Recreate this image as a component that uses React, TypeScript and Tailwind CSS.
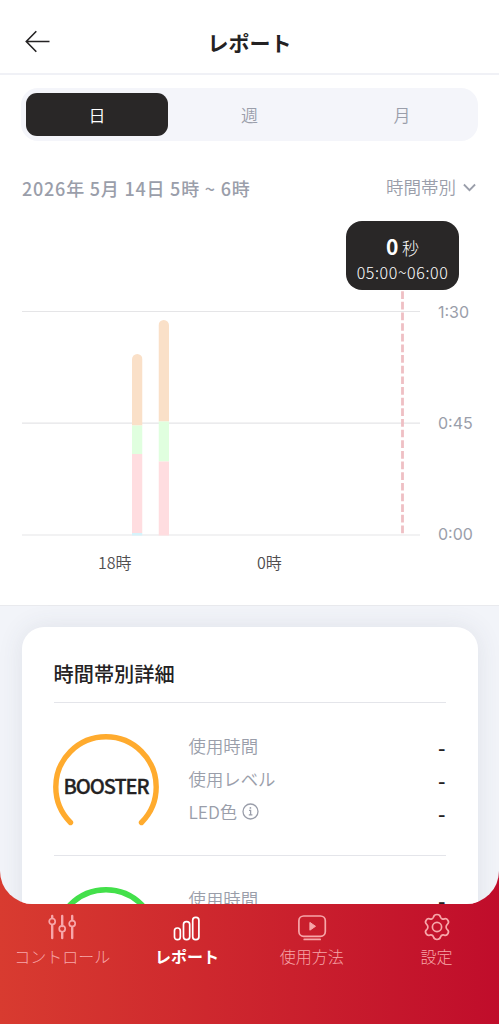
import React from 'react';
import { clsx } from 'clsx';

const TABS = ['日', '週', '月'];

type Segment = { color: string; from: number; to: number };

const BARS: { x: number; segments: Segment[] }[] = [
  {
    x: 110,
    segments: [
      { color: '#fae0c8', from: 43, to: 114.5 },
      { color: '#e0ffdf', from: 114.5, to: 143 },
      { color: '#ffdde0', from: 143, to: 222 },
      { color: '#d6f3fb', from: 222, to: 224.5 },
    ],
  },
  {
    x: 136.5,
    segments: [
      { color: '#fae0c8', from: 9, to: 110.5 },
      { color: '#e0ffdf', from: 110.5, to: 150.5 },
      { color: '#ffdde0', from: 150.5, to: 224.5 },
    ],
  },
];

const MODES = [
  { name: 'BOOSTER', color: '#ffab2e' },
  { name: '', color: '#43e04a' },
];

function Header() {
  return (
    <header className="relative flex h-[75px] items-center justify-center border-b-2 border-[#f0f1f6] pt-[10px]">
      <svg className="absolute left-[25px] top-[30px]" width="25" height="23" viewBox="0 0 25 23" fill="none" stroke="#242223" strokeWidth="1.6">
        <path d="M24.5 11.5H1.5M11.3 1.3L1.3 11.5L11.3 21.7" />
      </svg>
      <h1 className="text-[21px] font-bold leading-7 text-[#242223]">レポート</h1>
    </header>
  );
}

function PeriodTabs() {
  return (
    <div className="mx-[21px] mt-[13px] grid h-[53px] grid-cols-[142px_1fr_142px] rounded-[17px] bg-[#f4f5fa] p-[5px]">
      {TABS.map((tab, i) => (
        <button
          key={tab}
          className={clsx(
            'flex items-center justify-center text-[17px] font-[350]',
            i === 0 ? 'rounded-[11px] bg-[#292727] text-white' : 'text-[#9a9eaa]'
          )}
        >
          {tab}
        </button>
      ))}
    </div>
  );
}

function UsageChart() {
  return (
    <div className="relative mt-[110px] h-[294px]">
      <div className="flex">
        <svg className="ml-[22px] shrink-0 overflow-visible" width="398" height="226" viewBox="0 0 398 226">
          <g stroke="#e5e5e7" strokeWidth="1.2">
            <path d="M0 .5H398M0 112.2H398M0 224H398" />
          </g>
          {BARS.map((bar, i) => (
            <g key={bar.x}>
              <clipPath id={`bar-${i}`}>
                <path d={`M${bar.x} 225V${bar.segments[0].from + 5.25}a5.25 5.25 0 0 1 10.5 0V225z`} />
              </clipPath>
              <g clipPath={`url(#bar-${i})`}>
                {bar.segments.map((s) => (
                  <rect key={s.from} x={bar.x} y={s.from} width="10.5" height={s.to - s.from} fill={s.color} />
                ))}
              </g>
            </g>
          ))}
          <path d="M380.5 222.2V-21" stroke="#efbfc4" strokeWidth="2.8" strokeDasharray="7.7 2.95" />
        </svg>
        <div className="-mt-[9px] ml-[18px] flex h-[242px] flex-col justify-between font-['Inter'] text-[16px] leading-5 text-[#9a9eaa]">
          <span>1:30</span>
          <span>0:45</span>
          <span>0:00</span>
        </div>
      </div>
      <div className="mt-[6px] flex text-[16px] font-[350] leading-6 text-[#504e4f]">
        <span className="ml-[98px] w-[159px]">18時</span>
        <span>0時</span>
      </div>
      <div className="absolute left-[346px] -top-[90px] flex h-[69px] w-[113px] flex-col items-center rounded-[16px] bg-[#292727] pt-[12px] text-white">
        <p className="text-[17px] font-light leading-[27px]">
          <span className="text-[21px] font-bold">0</span> 秒
        </p>
        <p className="-mt-px text-[16px] font-light leading-6 tracking-[0.6px]">05:00~06:00</p>
      </div>
    </div>
  );
}

function InfoIcon() {
  return (
    <svg width="17" height="17" viewBox="0 0 17 17" fill="none" stroke="#9a9eaa" strokeWidth="1.3">
      <circle cx="8.5" cy="8.5" r="7.5" />
      <path d="M7 7.4h1.6v4.4M6.8 11.8h3.6" />
      <circle cx="8.4" cy="4.9" r=".9" fill="#9a9eaa" stroke="none" />
    </svg>
  );
}

function ModeRow({ name, color }: { name: string; color: string }) {
  return (
    <div className="flex h-[153px] border-t border-[#e4e5ea] pt-[26px]">
      <div className="relative -ml-px mt-[5px] flex h-[106px] w-[106px] shrink-0 items-center justify-center">
        <svg className="absolute inset-0" width="106" height="106" viewBox="0 0 106 106" fill="none">
          <path d="M17.5 88.5A50.2 50.2 0 1 1 88.5 88.5" stroke={color} strokeWidth="5.4" strokeLinecap="round" />
        </svg>
        <span className="-mt-[3px] whitespace-nowrap pl-px text-[20px] font-medium tracking-[-1.05px] text-[#242223] [-webkit-text-stroke:0.3px]">{name}</span>
      </div>
      <dl className="ml-[30px] flex-1 text-[17.4px] font-[350] text-[#9a9eaa]">
        {['使用時間', '使用レベル', 'LED色'].map((label) => (
          <div key={label} className="flex h-[33px] items-center justify-between">
            <dt className="flex items-center gap-[5px] leading-[33px]">
              {label}
              {label === 'LED色' && <InfoIcon />}
            </dt>
            <dd className="pt-[2px] text-[21px] font-medium leading-6 text-[#242223]">-</dd>
          </div>
        ))}
      </dl>
    </div>
  );
}

const NAV = [
  {
    label: 'コントロール',
    icon: (
      <>
        <path strokeWidth="2.4" strokeLinecap="round" d="M5.2 3v2M5.2 12v13M15.2 3v10M15.2 20v5M25.2 3v4M25.2 14v11" />
        <circle cx="5.2" cy="8.5" r="3" />
        <circle cx="15.2" cy="15.8" r="3" />
        <circle cx="25.2" cy="10.6" r="3" />
      </>
    ),
  },
  {
    label: 'レポート',
    icon: (
      <>
        <rect x="2.5" y="15" width="5.8" height="11.7" rx="2.7" />
        <rect x="11.5" y="8.7" width="6.2" height="18" rx="2.9" />
        <rect x="20.7" y="4.4" width="6.2" height="22.3" rx="2.9" />
      </>
    ),
  },
  {
    label: '使用方法',
    icon: (
      <>
        <rect x="1.9" y="3" width="26.4" height="20.4" rx="4.8" />
        <path fill="currentColor" strokeWidth="1" strokeLinejoin="round" d="M12.9 9.4v7.8l5.6-3.9z" />
        <path strokeLinecap="round" d="M7.2 26.4h16" />
      </>
    ),
  },
  {
    label: '設定',
    icon: (
      <>
        <path
          strokeLinejoin="round"
          d="M11.4 4.2C12 2 13.2 1.5 15 1.5S18 2 18.6 4.2C19.2 5.8 20.8 6.5 22.3 5.9C24.3 5.2 25 5.9 26 7.5S26.9 10 25.3 11.3C23.7 12.7 23.7 15.3 25.3 16.7C26.9 18 26.9 19 26 20.5S24.3 22.8 22.3 22.1C20.8 21.5 19.2 22.2 18.6 23.8C18 26 16.8 26.5 15 26.5S12 26 11.4 23.8C10.8 22.2 9.2 21.5 7.7 22.1C5.7 22.8 5 22.1 4 20.5S3.1 18 4.7 16.7C6.3 15.3 6.3 12.7 4.7 11.3C3.1 10 3.1 9 4 7.5S5.7 5.2 7.7 5.9C9.2 6.5 10.8 5.8 11.4 4.2Z"
        />
        <circle cx="15" cy="14" r="4.6" />
      </>
    ),
  },
];

function BottomNav() {
  return (
    <nav className="grid h-[120px] grid-cols-4 pt-[9px]">
      {NAV.map((item) => (
        <a
          key={item.label}
          className={clsx(
            'flex flex-col items-center text-[16px] leading-6',
            item.label === 'レポート' ? 'font-bold text-white' : 'font-light text-[#f7a6a9]'
          )}
        >
          <svg width="30" height="30" viewBox="0 0 30 30" fill="none" stroke="currentColor" strokeWidth="1.7">
            {item.icon}
          </svg>
          <span className="mt-px whitespace-nowrap">{item.label}</span>
        </a>
      ))}
    </nav>
  );
}

export default function App() {
  return (
    <div className="h-[1024px] w-[499px] overflow-hidden bg-linear-[90deg] from-[#d83b30] to-[#c00d2b] font-['Noto_Sans_CJK_JP',sans-serif]">
      <main className="h-[904px] overflow-hidden rounded-b-[33px] bg-[#f2f4f9]">
        <section className="h-[606px] border-b border-[#e9eaee] bg-white">
          <Header />
          <PeriodTabs />
          <div className="mx-[22px] mt-[32px] flex h-[28px] items-center justify-between text-[#9a9eaa]">
            <p className="pt-px text-[18px] font-medium leading-7 tracking-[0.78px]">2026年 5月 14日 5時 ~ 6時</p>
            <button className="flex items-center gap-[7px] text-[17.5px] font-[350] leading-7">
              時間帯別
              <svg className="mr-px" width="13" height="9" viewBox="0 0 13 9" fill="none" stroke="currentColor" strokeWidth="1.8">
                <path d="M.9 1.5L6.5 7.2L12.1 1.5" />
              </svg>
            </button>
          </div>
          <UsageChart />
        </section>
        <section className="mx-[21.5px] mt-[21px] h-[400px] rounded-[22px] bg-white px-[32px] shadow-[0_0_26px_rgba(60,70,90,0.10)]">
          <h2 className="flex h-[75px] items-center pt-[20px] text-[20.2px] font-medium text-[#242223]">時間帯別詳細</h2>
          {MODES.map((mode) => (
            <ModeRow key={mode.color} {...mode} />
          ))}
        </section>
      </main>
      <BottomNav />
    </div>
  );
}
